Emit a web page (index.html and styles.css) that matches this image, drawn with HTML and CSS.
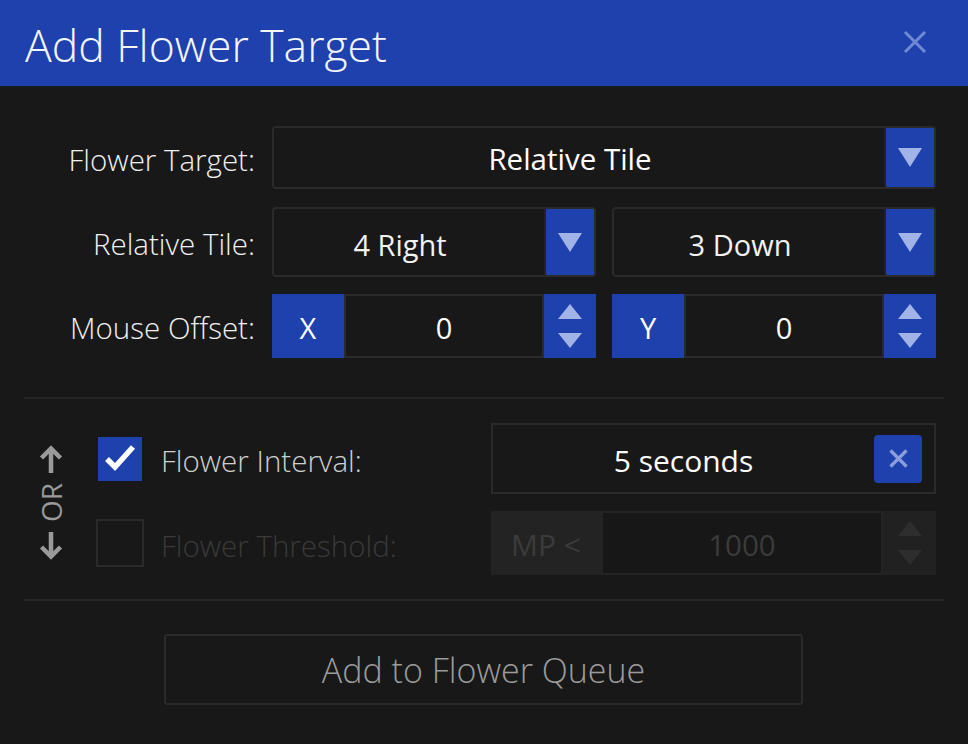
FILE: index.html
```html
<!DOCTYPE html>
<html lang="en">
<head>
<meta charset="utf-8">
<title>Add Flower Target</title>
<link rel="stylesheet" href="styles.css">
</head>
<body>
<div class="dialog">
  <header class="titlebar">
    <h1 class="title">Add Flower Target</h1>
    <button class="close" aria-label="Close">
      <svg width="24" height="24" viewBox="0 0 24 24"><path d="M2 2L22 22M22 2L2 22" stroke="#7189d4" stroke-width="3"/></svg>
    </button>
  </header>

  <section class="target">
    <div class="row r1">
      <div class="label">Flower Target:</div>
      <div class="select">
        <span class="sel-text strong">Relative Tile</span>
        <span class="arrow"><svg width="24" height="19" viewBox="0 0 24 19"><polygon points="0,0 24,0 12,19" fill="#a2b3e7"/></svg></span>
      </div>
    </div>
    <div class="row r2">
      <div class="label">Relative Tile:</div>
      <div class="pair">
        <div class="select">
          <span class="sel-text">4 Right</span>
          <span class="arrow"><svg width="24" height="19" viewBox="0 0 24 19"><polygon points="0,0 24,0 12,19" fill="#a2b3e7"/></svg></span>
        </div>
        <div class="select">
          <span class="sel-text">3 Down</span>
          <span class="arrow"><svg width="24" height="19" viewBox="0 0 24 19"><polygon points="0,0 24,0 12,19" fill="#a2b3e7"/></svg></span>
        </div>
      </div>
    </div>
    <div class="row r3">
      <div class="label">Mouse Offset:</div>
      <div class="pair">
        <div class="num">
          <span class="axis">X</span>
          <span class="val">0</span>
          <span class="spin">
            <svg width="24" height="15" viewBox="0 0 24 15"><polygon points="12,0 24,15 0,15" fill="#a2b3e7"/></svg>
            <svg width="24" height="15" viewBox="0 0 24 15"><polygon points="0,0 24,0 12,15" fill="#a2b3e7"/></svg>
          </span>
        </div>
        <div class="num">
          <span class="axis">Y</span>
          <span class="val">0</span>
          <span class="spin">
            <svg width="24" height="15" viewBox="0 0 24 15"><polygon points="12,0 24,15 0,15" fill="#a2b3e7"/></svg>
            <svg width="24" height="15" viewBox="0 0 24 15"><polygon points="0,0 24,0 12,15" fill="#a2b3e7"/></svg>
          </span>
        </div>
      </div>
    </div>
  </section>

  <div class="divider"></div>

  <section class="trigger">
    <div class="or">
      <svg width="24" height="28" viewBox="0 0 24 28"><path d="M12 28V4M2.5 13L12 3.5L21.5 13" fill="none" stroke="#9a9a9a" stroke-width="4.5"/></svg>
      <span class="or-text">OR</span>
      <svg width="24" height="28" viewBox="0 0 24 28"><path d="M12 0V24M2.5 15L12 24.5L21.5 15" fill="none" stroke="#9a9a9a" stroke-width="4.5"/></svg>
    </div>
    <div class="opts">
      <div class="opt opt-a">
        <span class="check on"><span class="box"><svg width="44" height="44" viewBox="0 0 44 44"><path d="M9 22L17 30L35 10" fill="none" stroke="#ffffff" stroke-width="5.5"/></svg></span></span>
        <span class="opt-label">Flower Interval:</span>
        <div class="field interval">
          <span class="int-text">5 seconds</span>
          <span class="clear"><svg width="19" height="19" viewBox="0 0 19 19"><path d="M1.5 1.5L17.5 17.5M17.5 1.5L1.5 17.5" stroke="#8b9edc" stroke-width="3.2"/></svg></span>
        </div>
      </div>
      <div class="opt opt-b">
        <span class="check off"></span>
        <span class="opt-label dim">Flower Threshold:</span>
        <div class="field threshold">
          <span class="mp">MP &lt;</span>
          <span class="tval">1000</span>
          <span class="tspin">
            <svg width="24" height="15" viewBox="0 0 24 15"><polygon points="12,0 24,15 0,15" fill="#2e2e2e"/></svg>
            <svg width="24" height="15" viewBox="0 0 24 15"><polygon points="0,0 24,0 12,15" fill="#2e2e2e"/></svg>
          </span>
        </div>
      </div>
    </div>
  </section>

  <div class="divider divider2"></div>

  <div class="footer">
    <button class="queue">Add to Flower Queue</button>
  </div>
</div>
</body>
</html>
```

FILE: styles.css
```css
html, body {
  margin: 0;
  padding: 0;
  background: #181818;
  font-family: "Open Sans", "Noto Sans", sans-serif;
  color: #e8e8e8;
}

.dialog {
  width: 968px;
  height: 744px;
  background: #181818;
}

.titlebar {
  height: 86px;
  background: #1f41ad;
  display: flex;
  align-items: center;
  justify-content: space-between;
  padding: 0 41px 0 25px;
  box-sizing: border-box;
}

.title {
  margin: 0;
  font-size: 44.5px;
  font-weight: 300;
  line-height: 1;
  color: #f3f5ff;
  padding-top: 4px;
}

.close {
  background: none;
  border: 0;
  padding: 0;
  display: flex;
  margin-top: -3px;
}

.target {
  padding: 40px 32px 0 0;
}

.row {
  display: grid;
  grid-template-columns: 255px 1fr;
  column-gap: 17px;
  align-items: center;
}

.r1 { height: 63px; }
.r2 { height: 70px; margin-top: 18px; }
.r3 { height: 64px; margin-top: 17px; }

.label {
  text-align: right;
  font-size: 29.5px;
  font-weight: 300;
  color: #f0f0f0;
  padding-top: 3px;
}

.pair {
  display: grid;
  grid-template-columns: 1fr 1fr;
  column-gap: 16px;
  height: 100%;
}

.select {
  display: flex;
  height: 100%;
  border: 2px solid #2a2a2a;
  border-radius: 4px;
  box-sizing: border-box;
}

.sel-text {
  flex: 1;
  display: flex;
  align-items: center;
  justify-content: center;
  font-size: 29px;
  color: #f2f2f2;
  padding: 4px 18px 0 0;
}

.sel-text.strong {
  font-weight: 500;
  font-size: 29.5px;
  color: #ffffff;
  padding-top: 2px;
}

.arrow {
  width: 48px;
  background: #1f41ad;
  border-left: 2px solid #222222;
  display: flex;
  align-items: center;
  justify-content: center;
}

.num {
  display: flex;
  height: 100%;
}

.axis {
  width: 72px;
  background: #1f41ad;
  color: #ffffff;
  font-size: 29px;
  padding-top: 2px;
  display: flex;
  align-items: center;
  justify-content: center;
}

.val {
  flex: 1;
  border: 2px solid #2a2a2a;
  display: flex;
  align-items: center;
  justify-content: center;
  font-size: 29px;
  padding-top: 2px;
  color: #ffffff;
}

.spin {
  width: 52px;
  background: #1f41ad;
  display: flex;
  flex-direction: column;
  align-items: center;
  justify-content: center;
  gap: 14px;
}

.divider {
  height: 2px;
  background: #262626;
  margin: 39px 24px 0;
}

.trigger {
  display: flex;
  padding: 24px 32px 0 24px;
}

.or {
  width: 24px;
  margin: 22px 33px 0 15px;
  display: flex;
  flex-direction: column;
  align-items: center;
  gap: 10px;
  color: #9a9a9a;
}

.or-text {
  writing-mode: vertical-rl;
  transform: rotate(180deg);
  font-size: 28px;
  line-height: 24px;
}

.opts {
  flex: 1;
  display: flex;
  flex-direction: column;
  gap: 17px;
}

.opt {
  display: flex;
  align-items: center;
}

.opt-a { height: 71px; }
.opt-b { height: 64px; }

.check {
  width: 48px;
  height: 48px;
  box-sizing: border-box;
  display: flex;
  align-items: center;
  justify-content: center;
}

.check.on .box {
  width: 44px;
  height: 44px;
  background: #1f41ad;
  display: flex;
}

.check.off {
  border: 2px solid #2a2a2a;
}

.opt-label {
  flex: 1;
  margin-left: 17px;
  font-size: 29.5px;
  font-weight: 300;
  color: #cfcfcf;
  padding-top: 4px;
}

.opt-label.dim {
  color: #3a3a3a;
}

.field {
  width: 445px;
  height: 100%;
  box-sizing: border-box;
}

.interval {
  border: 2px solid #2a2a2a;
  display: flex;
  align-items: center;
  padding-right: 12px;
}

.int-text {
  flex: 1;
  text-align: center;
  font-size: 30px;
  font-weight: 500;
  color: #ffffff;
  padding-top: 4px;
}

.clear {
  width: 48px;
  height: 48px;
  background: #1f41ad;
  border-radius: 4px;
  display: flex;
  align-items: center;
  justify-content: center;
}

.threshold {
  display: flex;
}

.mp {
  width: 110px;
  background: #232323;
  color: #3b3b3b;
  font-size: 30px;
  padding-top: 3px;
  display: flex;
  align-items: center;
  justify-content: center;
}

.tval {
  flex: 1;
  border: 2px solid #242424;
  background: #171717;
  color: #3b3b3b;
  font-size: 29.5px;
  padding-top: 3px;
  display: flex;
  align-items: center;
  justify-content: center;
}

.tspin {
  width: 53px;
  background: #212121;
  display: flex;
  flex-direction: column;
  align-items: center;
  justify-content: center;
  gap: 14px;
}

.divider2 {
  margin-top: 24px;
}

.footer {
  padding-top: 33px;
  display: flex;
  justify-content: center;
}

.queue {
  width: 639px;
  height: 71px;
  background: transparent;
  border: 2px solid #2a2a2a;
  border-radius: 3px;
  font-family: "Open Sans", "Noto Sans", sans-serif;
  font-size: 34px;
  font-weight: 300;
  color: #9c9c9c;
  margin-left: -1px;
  padding-top: 2px;
}
```
